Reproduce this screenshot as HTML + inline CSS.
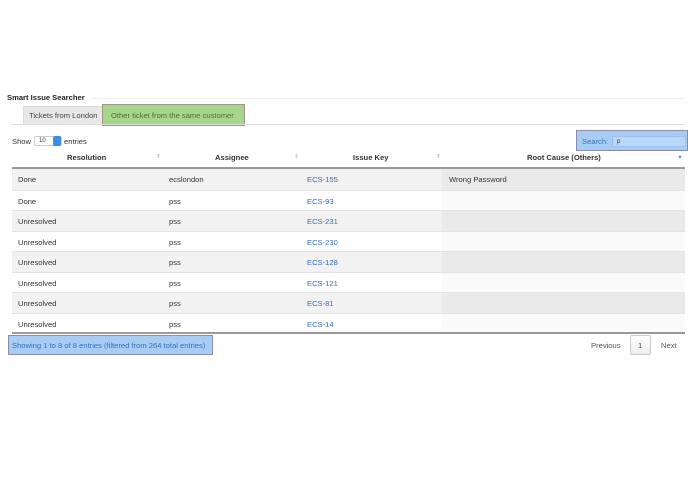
<!DOCTYPE html>
<html><head><meta charset="utf-8"><style>
*{margin:0;padding:0;box-sizing:border-box}
body{width:695px;height:494px;background:#fff;font-family:"Liberation Sans",sans-serif;font-size:7.6px;color:#333;position:relative;overflow:hidden}
.a{position:absolute;white-space:nowrap}
.row{position:absolute;left:12px;width:673px;height:20.5px;border-top:1px solid #e4e4e4}
.row span{position:absolute;top:6px}
.odd{background:#f2f2f2}
.rc{position:absolute;left:430px;top:0;width:243px;height:100%;background:#fafafa}
.odd .rc{background:#eaeaea}
a{color:#3a6fb5;text-decoration:none}
</style></head><body>
<div class="a" style="left:7px;top:93px;font-weight:bold;color:#222">Smart Issue Searcher</div>
<div class="a" style="left:92px;top:98px;width:593px;height:1px;background:#eee"></div>
<div class="a" style="left:23px;top:106px;width:80px;height:19px;background:#e8e8e8;border:1px solid #ddd"></div>
<div class="a" style="left:29px;top:111px;color:#444">Tickets from London</div>
<div class="a" style="left:102px;top:104px;width:143px;height:22px;background:#a6d58b;border:1.5px solid #9a9a80"></div>
<div class="a" style="left:111px;top:111px;color:#4d6e3a">Other ticket from the same customer</div>
<div class="a" style="left:12px;top:124px;width:673px;height:1px;background:#ddd"></div>
<div class="a" style="left:12px;top:137px">Show</div>
<div class="a" style="left:34px;top:136px;width:28px;height:10px;border:1px solid #ccc;border-radius:2px;background:#fff;font-size:6px;padding:1px 0 0 4px">10</div>
<div class="a" style="left:53px;top:136px;width:8px;height:10px;background:#3b8ee6;border-radius:2px"></div>
<div class="a" style="left:64px;top:137px">entries</div>
<div class="a" style="left:576px;top:130px;width:112px;height:21px;background:#a8cdf5;border:1.5px solid #8c8ca8"></div>
<div class="a" style="left:582px;top:137px;color:#3a6fb5">Search:</div>
<div class="a" style="left:612px;top:136px;width:74px;height:11px;background:#b9d8f8;border:1px solid #9cc0ea;font-size:6px;padding:2px 0 0 4px">p</div>
<div class="a" style="left:67px;top:153px;font-weight:bold">Resolution</div>
<div class="a" style="left:215px;top:153px;font-weight:bold">Assignee</div>
<div class="a" style="left:353px;top:153px;font-weight:bold">Issue Key</div>
<div class="a" style="left:527px;top:153px;font-weight:bold">Root Cause (Others)</div>
<div class="a" style="left:156px;top:153px;color:#ccc;font-size:6px">⬍</div>
<div class="a" style="left:294px;top:153px;color:#ccc;font-size:6px">⬍</div>
<div class="a" style="left:436px;top:153px;color:#ccc;font-size:6px">⬍</div>
<div class="a" style="left:677px;top:155px;color:#6a8fd0;font-size:6px">▼</div>
<div class="a" style="left:12px;top:167px;width:673px;height:2px;background:#999"></div>

<div class="row odd" style="top:169px;border-top:none"><div class="rc"></div><span style="left:6px">Done</span><span style="left:157px">ecslondon</span><span style="left:295px"><a>ECS-155</a></span><span style="left:437px">Wrong Password</span></div>
<div class="row" style="top:189.5px"><div class="rc"></div><span style="left:6px">Done</span><span style="left:157px">pss</span><span style="left:295px"><a>ECS-93</a></span></div>
<div class="row odd" style="top:210px"><div class="rc"></div><span style="left:6px">Unresolved</span><span style="left:157px">pss</span><span style="left:295px"><a>ECS-231</a></span></div>
<div class="row" style="top:230.5px"><div class="rc"></div><span style="left:6px">Unresolved</span><span style="left:157px">pss</span><span style="left:295px"><a>ECS-230</a></span></div>
<div class="row odd" style="top:251px"><div class="rc"></div><span style="left:6px">Unresolved</span><span style="left:157px">pss</span><span style="left:295px"><a>ECS-128</a></span></div>
<div class="row" style="top:271.5px"><div class="rc"></div><span style="left:6px">Unresolved</span><span style="left:157px">pss</span><span style="left:295px"><a>ECS-121</a></span></div>
<div class="row odd" style="top:292px"><div class="rc"></div><span style="left:6px">Unresolved</span><span style="left:157px">pss</span><span style="left:295px"><a>ECS-81</a></span></div>
<div class="row" style="top:312.5px"><div class="rc"></div><span style="left:6px">Unresolved</span><span style="left:157px">pss</span><span style="left:295px"><a>ECS-14</a></span></div>
<div class="a" style="left:12px;top:332px;width:673px;height:1.5px;background:#999"></div>

<div class="a" style="left:8px;top:335px;width:205px;height:20px;background:#a8cdf5;border:1.5px solid #8c8ca8"></div>
<div class="a" style="left:12px;top:341px;color:#3a6fb5">Showing 1 to 8 of 8 entries (filtered from 264 total entries)</div>
<div class="a" style="left:591px;top:341px;color:#555">Previous</div>
<div class="a" style="left:630px;top:335px;width:21px;height:20px;border:1px solid #ccc;border-radius:2px;background:linear-gradient(#fff,#eee)"></div>
<div class="a" style="left:638px;top:341px;color:#444">1</div>
<div class="a" style="left:661px;top:341px;color:#555">Next</div>
</body></html>
